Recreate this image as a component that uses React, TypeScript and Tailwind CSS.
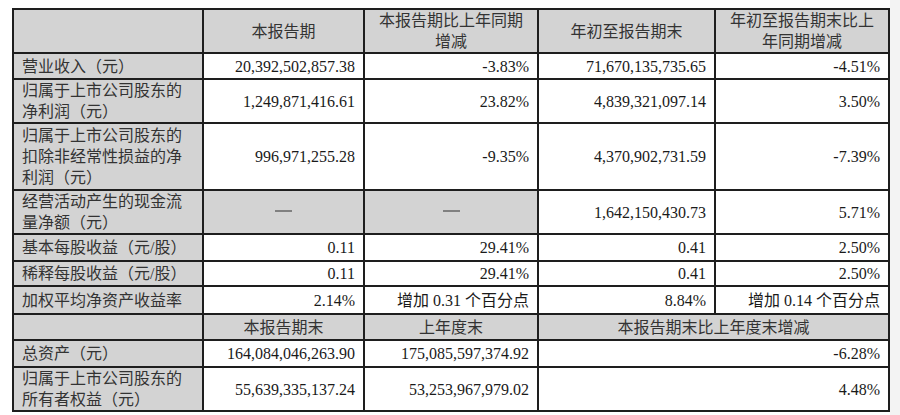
// Key financial figures table — a scanned quarterly report section.

type Cell = {
  text: string[];
  align?: "left" | "right" | "center";
  gray?: boolean;
  span?: number;
  dash?: boolean;
};

type Row = { h: string; cells: Cell[] };

const num = (t: string): Cell => ({ text: [t], align: "right" });
const label = (...lines: string[]): Cell => ({ text: lines, align: "left", gray: true });
const head = (...lines: string[]): Cell => ({ text: lines, align: "center", gray: true });
const dash: Cell = { text: ["—"], align: "center", gray: true, dash: true };

const rows: Row[] = [
  {
    h: "h-[44px]",
    cells: [
      head(""),
      head("本报告期"),
      head("本报告期比上年同期", "增减"),
      head("年初至报告期末"),
      head("年初至报告期末比上", "年同期增减"),
    ],
  },
  {
    h: "h-[26px]",
    cells: [label("营业收入（元）"), num("20,392,502,857.38"), num("-3.83%"), num("71,670,135,735.65"), num("-4.51%")],
  },
  {
    h: "h-[43px]",
    cells: [
      label("归属于上市公司股东的", "净利润（元）"),
      num("1,249,871,416.61"),
      num("23.82%"),
      num("4,839,321,097.14"),
      num("3.50%"),
    ],
  },
  {
    h: "h-[67px]",
    cells: [
      label("归属于上市公司股东的", "扣除非经常性损益的净", "利润（元）"),
      num("996,971,255.28"),
      num("-9.35%"),
      num("4,370,902,731.59"),
      num("-7.39%"),
    ],
  },
  {
    h: "h-[43px]",
    cells: [label("经营活动产生的现金流", "量净额（元）"), dash, dash, num("1,642,150,430.73"), num("5.71%")],
  },
  {
    h: "h-[27px]",
    cells: [label("基本每股收益（元/股）"), num("0.11"), num("29.41%"), num("0.41"), num("2.50%")],
  },
  {
    h: "h-[25px]",
    cells: [label("稀释每股收益（元/股）"), num("0.11"), num("29.41%"), num("0.41"), num("2.50%")],
  },
  {
    h: "h-[28px]",
    cells: [
      label("加权平均净资产收益率"),
      num("2.14%"),
      num("增加 0.31 个百分点"),
      num("8.84%"),
      num("增加 0.14 个百分点"),
    ],
  },
  {
    h: "h-[26px]",
    cells: [head(""), head("本报告期末"), head("上年度末"), { ...head("本报告期末比上年度末增减"), span: 2 }],
  },
  {
    h: "h-[27px]",
    cells: [
      label("总资产（元）"),
      num("164,084,046,263.90"),
      num("175,085,597,374.92"),
      { text: ["-6.28%"], align: "right", span: 2 },
    ],
  },
  {
    h: "h-[42px]",
    cells: [
      label("归属于上市公司股东的", "所有者权益（元）"),
      num("55,639,335,137.24"),
      num("53,253,967,979.02"),
      { text: ["4.48%"], align: "right", span: 2 },
    ],
  },
];

const alignClass = {
  left: "text-left",
  right: "text-right",
  center: "text-center",
};

export default function App() {
  return (
    <div
      className="flex h-[415px] w-[900px] bg-white"
      style={{ fontFamily: '"Liberation Serif", "Noto Sans CJK SC", serif' }}
    >
      <div className="flex-1 pl-[12px] pt-[8px]">
        <table className="table-fixed border-collapse border-2 border-[#111] text-[16px] text-[#1a1a1a]">
          <colgroup>
            <col className="w-[190px]" />
            <col className="w-[161px]" />
            <col className="w-[174px]" />
            <col className="w-[177px]" />
            <col className="w-[174px]" />
          </colgroup>
          <tbody>
            {rows.map((row, i) => (
              <tr key={i} className={row.h}>
                {row.cells.map((c, j) => (
                  <td
                    key={j}
                    colSpan={c.span}
                    className={`border-2 border-[#1e1e1e] px-[8px] py-0 align-middle leading-[21px] ${
                      alignClass[c.align ?? "right"]
                    } ${c.gray ? "bg-[#d3d3d3]" : "bg-white"} ${
                      c.align === "right" ? "" : "text-[#333]"
                    }`}
                  >
                    {c.dash ? (
                      <span className="inline-block h-[2px] w-[17px] translate-y-[-3px] bg-[#808080] align-middle" />
                    ) : (
                      c.text.map((t, k) => (
                        <div key={k} className="whitespace-nowrap">
                          {t}
                        </div>
                      ))
                    )}
                  </td>
                ))}
              </tr>
            ))}
          </tbody>
        </table>
      </div>
      <div className="w-[10px] bg-[#f3f3f3]" />
    </div>
  );
}
